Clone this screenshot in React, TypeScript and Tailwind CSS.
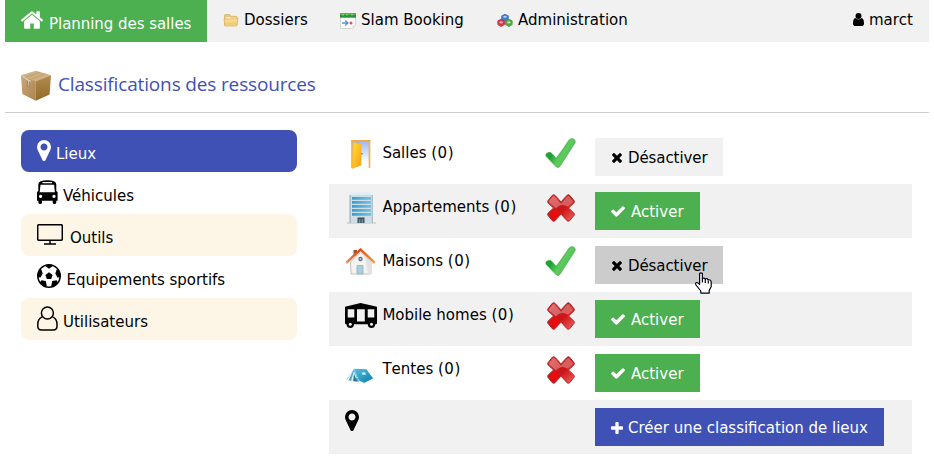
import type { ReactNode } from 'react';

const PIN = 'M1152 640q0-106-75-181t-181-75-181 75-75 181 75 181 181 75 181-75 75-181zm256 0q0 109-33 179l-364 774q-16 33-47.5 52t-67.5 19-67.5-19-46.5-52l-365-774q-33-70-33-179 0-212 150-362t362-150 362 150 150 362z';
const HOME = 'M1472 992v480q0 26-19 45t-45 19h-384v-384h-256v384h-384q-26 0-45-19t-19-45v-480q0-1 .5-3t.5-3l575-474 575 474q1 2 1 6zm223-69l-62 74q-8 9-21 11h-3q-13 0-21-7l-692-577-692 577q-12 8-24 7-13-2-21-11l-62-74q-8-10-7-23.5t11-21.5l719-599q32-26 76-26t76 26l244 204v-195q0-14 9-23t23-9h192q14 0 23 9t9 23v408l219 182q10 8 11 21.5t-7 23.5z';
const CHECK = 'M1671 566q0 40-28 68l-724 724-136 136q-28 28-68 28t-68-28l-136-136-362-362q-28-28-28-68t28-68l136-136q28-28 68-28t68 28l294 295 656-657q28-28 68-28t68 28l136 136q28 28 28 68z';
const TIMES = 'M1490 1322q0 40-28 68l-136 136q-28 28-68 28t-68-28l-294-294-294 294q-28 28-68 28t-68-28l-136-136q-28-28-28-68t28-68l294-294-294-294q-28-28-28-68t28-68l136-136q28-28 68-28t68 28l294 294 294-294q28-28 68-28t68 28l136 136q28 28 28 68t-28 68l-294 294 294 294q28 28 28 68z';
const PLUS = 'M1600 736v192q0 40-28 68t-68 28h-416v416q0 40-28 68t-68 28h-192q-40 0-68-28t-28-68v-416h-416q-40 0-68-28t-28-68v-192q0-40 28-68t68-28h416v-416q0-40 28-68t68-28h192q40 0 68 28t28 68v416h416q40 0 68 28t28 68z';

function Box() {
  return (
    <svg className="h-[32px] w-[31px] shrink-0" viewBox="0 0 31 32">
      <defs>
        <linearGradient id="boxL" x1="0" y1="0" x2="1" y2="1"><stop offset="0" stopColor="#c8a878" /><stop offset="1" stopColor="#ab8450" /></linearGradient>
        <linearGradient id="boxR" x1="0" y1="0" x2="0" y2="1"><stop offset="0" stopColor="#b28b50" /><stop offset="1" stopColor="#916929" /></linearGradient>
      </defs>
      <path d="M0 5.200 15 .8l15 4.400L14.800 12z" fill="#cfb082" />
      <path d="M0 5.200 14.800 11.500v19.300L1.300 24z" fill="url(#boxL)" />
      <path d="M14.800 11.500 30 5.200 28.600 24.500 14.800 30.800z" fill="url(#boxR)" />
      <path d="M5 7.300 19.500 2.100M9.500 9.200 24.500 3.600" stroke="#bb9862" strokeWidth=".7" fill="none" />
      <path d="M1.500 6.500l6 4 .8 6M5 8.500l5 3" stroke="#ddd6ca" strokeWidth="1" fill="none" />
      <path d="M6.500 11v6M8.600 12v5.500" stroke="#8f7f66" strokeWidth=".8" />
    </svg>
  );
}

function Folder() {
  return (
    <svg className="mt-[14px] h-[13px] w-4 shrink-0" viewBox="0 0 16 14">
      <path d="M1 12V1.500Q1 .5 2 .5h4.500L8 2.500h5.500q1 0 1 1V12z" fill="#eac678" stroke="#d0ab62" strokeWidth=".7" />
      <path d="M2.500 3.500h11v4h-11z" fill="#fbf0cf" />
      <path d="M.4 5.500h6l1.500-1.200h7.700L14 13H1.500z" fill="#f6d88c" stroke="#dcae5a" strokeWidth=".7" />
      <path d="M1.500 9h13L14 12.500H1.500z" fill="#ecc36d" opacity=".6" />
    </svg>
  );
}

function Calendar() {
  return (
    <svg className="mt-[13px] h-4 w-4 shrink-0" viewBox="0 0 16 16">
      <path d="M.5 3h15v9.500L12.500 15.500H.5z" fill="#fff" stroke="#c6c6c6" strokeWidth=".7" />
      <path d="M0 .3h16v4.400H0z" fill="#26923c" />
      <path d="M0 .3h16v1.700H0z" fill="#51b244" />
      <path d="M3 1v1.500M7 1v1.500M12 1v1.500" stroke="#d9f2d2" strokeWidth=".8" />
      <path d="M2 10h5.500M5.200 7.500 8 10l-2.800 2.500" stroke="#5a93cf" strokeWidth="1.300" fill="none" />
      <circle cx="11" cy="10" r="1.500" fill="#e8534c" />
      <path d="M12.500 15.500v-3h3z" fill="#ddd" />
    </svg>
  );
}

function Cubes() {
  return (
    <svg className="mt-[14px] h-[13px] w-4 shrink-0" viewBox="0 0 17 14">
      <path d="M5 2 8.500 .4 12 2v4L8.500 7.800 5 6z" fill="#3f7fd0" stroke="#3a74bd" strokeWidth="1" strokeLinejoin="round" />
      <path d="M.8 7.400 4.300 5.700 7.900 7.400v4l-3.600 2.100L.8 11.400z" fill="#d53a49" stroke="#c53343" strokeWidth="1" strokeLinejoin="round" />
      <path d="M9.100 7.400l3.500-1.700 3.600 1.700v4l-3.600 2.100-3.500-2.100z" fill="#55a646" stroke="#4c9a3f" strokeWidth="1" strokeLinejoin="round" />
      <ellipse cx="8.500" cy="3" rx="2" ry="1.100" fill="#b5d3f5" />
      <ellipse cx="4.300" cy="9" rx="1.800" ry="1.300" fill="#f3a5ac" />
      <ellipse cx="12.600" cy="9" rx="1.800" ry="1.300" fill="#bfe6b2" />
    </svg>
  );
}

function Person() {
  return (
    <svg className="mt-[13px] h-[13px] w-[11px] shrink-0" viewBox="0 0 11 13">
      <circle cx="5.500" cy="3" r="3" />
      <path d="M2.400 5Q0 5.800 0 10.200 0 13 2.200 13h6.600Q11 13 11 10.200 11 5.800 8.600 5 7.400 6.400 5.500 6.400T2.400 5z" />
    </svg>
  );
}

function Bus() {
  return (
    <svg className="mt-[8px] h-6 w-[21px] shrink-0" viewBox="0 0 21 24">
      <path fillRule="evenodd" d="M0 14.500V12l1.300-1V4.500Q1.500.3 10.300.3T19.300 4.500V11l1.300 1V20.800h-1.300v1.700Q19.300 24 17.500 24t-1.800-1.500v-1.700H5v1.700Q5 24 3.200 24t-1.800-1.500v-1.700H0zM5.500 2v1.200h9.600V2zM3.500 4.700 2.700 12.300h15.200L17.100 4.700zM3.600 14.800a1.600 1.600 0 1 0 .01 0zM17 14.800a1.600 1.600 0 1 0 .01 0z" />
    </svg>
  );
}

function Monitor() {
  return (
    <svg className="mt-[10px] h-[21px] w-[26px] shrink-0" viewBox="0 0 26 21" fill="none" stroke="#000">
      <rect x=".7" y=".8" width="24.600" height="15.500" rx="1.200" strokeWidth="1.500" />
      <path d="M13 16v4M7 20h12" strokeWidth="1.500" />
    </svg>
  );
}

function Ball() {
  return (
    <svg className="mt-[8px] h-6 w-6 shrink-0" viewBox="0 0 24 24">
      <defs><clipPath id="ballclip"><circle cx="12" cy="12" r="11.500" /></clipPath></defs>
      <circle cx="12" cy="12" r="11.200" fill="#fff" stroke="#000" strokeWidth="1.500" />
      <g clipPath="url(#ballclip)">
        <path d="M12 8.300l3.600 2.600-1.400 4.200H9.800L8.400 10.900z" />
        <path d="M7.600 1.500 12 4.800l4.400-3.300L15 0H9zM.2 7l4-1.800L5.700 9.500 3.500 13.500 0 13zM23.800 7l-4-1.800-1.500 4.300 2.200 4 3.500-.5zM4.300 16.200l4.500.8 1 5-2.500 2-5-4zM19.700 16.200l-4.500.8-1 5 2.500 2 5-4z" />
      </g>
    </svg>
  );
}

function UserOutline() {
  return (
    <svg className="mt-[8px] h-[25px] w-[21px] shrink-0" viewBox="0 0 21 25" fill="none" stroke="#000" strokeWidth="1.500">
      <circle cx="10.400" cy="7" r="6" />
      <path d="M5.300 10.900Q.8 12.500.8 18.500V20.300Q.8 24 4.500 24h11.800q3.700 0 3.700-3.700V18.500q0-6-4.500-7.600" />
    </svg>
  );
}

function PinIcon({ className }: { className: string }) {
  return <svg className={className} viewBox="384 128 1024 1536" fill="currentColor"><path d={PIN} /></svg>;
}

function Door() {
  return (
    <svg className="ml-[21px] mt-[10px] h-[29px] w-[21px]" viewBox="0 0 21 29">
      <defs>
        <linearGradient id="sky" x1="0" y1="0" x2="0" y2="1"><stop offset="0" stopColor="#9db8f0" /><stop offset=".8" stopColor="#fff" /></linearGradient>
        <linearGradient id="leaf" x1="0" y1="0" x2="1" y2="1"><stop offset="0" stopColor="#ffe330" /><stop offset="1" stopColor="#fa9e18" /></linearGradient>
      </defs>
      <path d="M2 28V1.200h17.500V28" fill="url(#sky)" stroke="#edb45a" strokeWidth="1.700" />
      <path d="M1.200.8h19.300" stroke="#e9a63a" strokeWidth="1.300" />
      <path d="M3.500 2.500 11 4.200v21L2 28.500z" fill="url(#leaf)" stroke="#f2b02f" strokeWidth=".6" />
      <path d="M11 13.700h1.800" stroke="#8488a5" strokeWidth="1.600" />
    </svg>
  );
}

function Building() {
  return (
    <svg className="ml-[18px] mt-[8px] h-8 w-[29px]" viewBox="0 0 29 32">
      <defs>
        <linearGradient id="glass" x1="0" y1="0" x2="1" y2="0"><stop offset="0" stopColor="#3b9dcb" /><stop offset="1" stopColor="#74c0de" /></linearGradient>
      </defs>
      <path d="M0 30.500h29v1H0z" fill="#b9c0c4" />
      <path d="M4.500.5h19.500l1.800 3H2.500z" fill="#dceff6" />
      <path d="M2.500 3h23.300v28H2.500z" fill="#cfdde6" />
      <path d="M2.500 3h1.300v28H2.500zM24.700 3h1.100v28h-1.100z" fill="#a3b8c4" />
      <path d="M5 5h19v2.800H5zM5 9h19v2.800H5zM5 13h19v2.800H5zM5 17h19v2.800H5zM5 21h19v2.800H5z" fill="url(#glass)" />
      <path d="M10.500 25.500h7V31h-7z" fill="#3d4f5c" />
      <path d="M11.800 27h1.600v4h-1.600zM14.600 27h1.600v4h-1.600z" fill="#6e8c9b" />
    </svg>
  );
}

function House() {
  return (
    <svg className="ml-[16px] mt-[10px] h-[27px] w-[31px]" viewBox="0 0 31 27">
      <defs><linearGradient id="roof" x1="0" y1="0" x2="1" y2="0"><stop offset="0" stopColor="#f08a45" /><stop offset=".45" stopColor="#d7491c" /><stop offset="1" stopColor="#ff9a27" /></linearGradient></defs>
      <path d="M8.500 2h3.500v6H8.500z" fill="#a5522f" />
      <path d="M5.500 14 15.500 4 26 14v12h-20z" fill="#f3f3f2" stroke="#b4b4b4" strokeWidth=".8" />
      <path d="M20 8l6 6v12h-3z" fill="#e2e2e2" />
      <path d="M1.500 16 15.500 3 29.500 16" fill="none" stroke="#e0cfc3" strokeWidth="1.400" />
      <path d="M1.300 14.500 15.500 1.500 29.700 14.500" fill="none" stroke="url(#roof)" strokeWidth="2.300" />
      <circle cx="15.500" cy="11" r="2.200" fill="#5c7184" /><circle cx="15.500" cy="11" r="1" fill="#b5ccda" />
      <path d="M12 17.500h6V26h-6z" fill="#a9cddc" stroke="#8eadba" strokeWidth=".7" />
    </svg>
  );
}

function MobileHome() {
  return (
    <svg className="ml-4 mt-[11px] h-[25px] w-8" viewBox="0 0 32 25">
      <path fillRule="evenodd" d="M0 4.200Q0 3.600 1 3.400L15.500 0 31 3.400q1 .2 1 .8V20q0 1.200-1.200 1.200H1.200Q0 21.200 0 20zM2.700 6.200v8.300h6.600V6.200zM12 6.200V18.500h7.800V6.200zM22.700 6.200v8.300h6.600V6.200z" />
      <circle cx="5.300" cy="21.300" r="3.700" /><circle cx="26.500" cy="21.300" r="3.700" />
      <circle cx="5.300" cy="21.300" r="1.500" fill="#f1f1f1" /><circle cx="26.500" cy="21.300" r="1.500" fill="#f1f1f1" />
    </svg>
  );
}

function Tent() {
  return (
    <svg className="ml-[17px] mt-[22px] h-4 w-[29px]" viewBox="0 0 29 16">
      <defs><linearGradient id="tent" x1="0" y1="0" x2="1" y2="1"><stop offset="0" stopColor="#54bfe0" /><stop offset="1" stopColor="#0b7eab" /></linearGradient></defs>
      <path d="M8 1.500 .5 12M12 12l7 3.500M21 6l7.500 4.500" stroke="#b5c9d1" strokeWidth=".8" />
      <path d="M8 1 2.500 12.500 13 13.800z" fill="#4ba9c8" />
      <path d="M8 .7 20.500 1.200 27 10.500 18.500 14.800 13 12.500z" fill="url(#tent)" />
      <path d="M8 3l-3 9.700 3.500.6 2-4z" fill="#d5f1fa" />
      <path d="M8 6l-.8 7 3.800.4z" fill="#227393" />
      <path d="M15.500 4.500l3.500-.3 1.200 2.300-3.500.5z" fill="#c1eaf6" />
    </svg>
  );
}

function Tick() {
  return (
    <svg className="h-[31px] w-[31px]" viewBox="0 0 31 31">
      <defs><linearGradient id="tick" x1="0" y1=".2" x2="1" y2=".8"><stop offset="0" stopColor="#3aa742" /><stop offset=".3" stopColor="#1ba331" /><stop offset=".55" stopColor="#5fca5e" /><stop offset="1" stopColor="#4cb655" /></linearGradient></defs>
      <path d="M1 18.300Q-.2 15.800 3 14.600q2.500-.8 4.200 1.200l3.900 4.400Q17.500 12 23.800 2.200q1.600-2.200 4.500-1.400 3 1.500 1.700 4.200L15.300 28q-2 3-4.500.5z" fill="url(#tick)" stroke="#3ba345" strokeWidth=".5" />
    </svg>
  );
}

function Cross() {
  return (
    <svg className="ml-[2px] h-7 w-7" viewBox="0 0 28 28">
      <defs><linearGradient id="cross" x1="0" y1="0" x2="1" y2="1"><stop offset="0" stopColor="#d83a3c" /><stop offset=".45" stopColor="#c4191b" /><stop offset=".58" stopColor="#cf1617" /><stop offset="1" stopColor="#ec6664" /></linearGradient></defs>
      <path d="M.9 6.800 5.400 1.200Q6.600.2 8 1.300L14 7.900 20 1.300q1.400-1.100 2.600-.1L27.100 6.800q.7 1.100-.3 2.300L21.500 14l5.300 5q1 1.200.3 2.300L22.600 26.800q-1.200 1-2.600-.1L14 20.100 8 26.700q-1.400 1.100-2.600.1L.9 21.300Q.2 20.200 1.200 19l5.300-5L1.200 9.100Q.2 7.900.9 6.800z" fill="url(#cross)" stroke="#a9201f" strokeWidth=".9" strokeLinejoin="round" />
      <path d="M2 7.200 6 2.300Q6.800 1.700 7.500 2.300L14 9.600 20.500 2.300q.7-.6 1.500 0l4 4.900q.3.600-.2 1.200l-4.800 4.300Q14 8.500 9 14.500L2.200 8.400Q1.700 7.800 2 7.200z" fill="#fff" opacity=".3" />
      <path d="M2 20.700 9 14.500l4 4.500-6.500 6.800z" fill="#ff0505" opacity=".6" />
    </svg>
  );
}

function Hand() {
  return (
    <svg className="absolute left-[100px] top-[26px] h-[22px] w-[17px]" viewBox="0 0 17 22">
      <path d="M4.600 1.500Q6 .2 7.400 1.500V6.500Q9 5.500 10.200 7q1.800-1 3 .8 2.600-.3 3 1.900v4.800l-2 4v2.600H5.800V19L1 13Q0 11 1.500 10.500q1.500-.2 3.100 2z" fill="#fff" stroke="#000014" strokeWidth="1.200" strokeLinejoin="round" />
      <path d="M7.400 6v4.500M10.300 7v4M13.300 8.500v3" stroke="#000014" strokeWidth="1.200" />
    </svg>
  );
}

function Btn({ kind, hover }: { kind: 'on' | 'off' | 'new'; hover?: boolean }) {
  if (kind === 'on')
    return (
      <button className="flex h-[38px] w-[105px] bg-[#4caf50] pl-4 pt-[10px] text-white">
        <svg className="mt-1 h-[11px] w-[14px]" viewBox="121 334 1550 1188" fill="currentColor"><path d={CHECK} /></svg>
        <span className="ml-[6px]">Activer</span>
      </button>
    );
  if (kind === 'off')
    return (
      <button className={hover ? 'relative flex h-[38px] w-[128px] bg-[#ccc] pl-[17px] pt-[10px]' : 'relative flex h-[38px] w-[128px] bg-[#f1f1f1] pl-[17px] pt-[10px]'}>
        <svg className="mt-[5px] h-[10px] w-[10px]" viewBox="302 366 1188 1188" fill="currentColor"><path d={TIMES} /></svg>
        <span className="ml-[6px] tracking-[-0.08px]">Désactiver</span>
        {hover && <Hand />}
      </button>
    );
  return (
    <button className="flex h-[38px] w-[289px] bg-[#3f51b5] pl-4 pt-[10px] text-white">
      <svg className="mt-[4px] h-3 w-3" viewBox="192 128 1408 1408" fill="currentColor"><path d={PLUS} /></svg>
      <span className="ml-[5px]">Créer une classification de lieux</span>
    </button>
  );
}

function Row({ icon, label, active, hover, shaded }: { icon: ReactNode; label: string; active: boolean; hover?: boolean; shaded?: boolean }) {
  return (
    <div className={shaded ? 'flex h-[54px] bg-[#f1f1f1]' : 'flex h-[54px]'}>
      <div className="w-[53.4px] shrink-0">{icon}</div>
      <span className="w-[162.600px] shrink-0 pt-[13px] [font-kerning:none]">{label} <span className="tracking-[0.500px]">(0)</span></span>
      <div className="w-[50px] shrink-0 pt-2">{active ? <Tick /> : <div className="pt-[2px]"><Cross /></div>}</div>
      <div className="pt-2"><Btn kind={active ? 'off' : 'on'} hover={hover} /></div>
    </div>
  );
}

export default function App() {
  return (
    <div className="h-[458px] w-[934px] overflow-hidden bg-white pl-[5px] font-['DejaVu_Sans',Verdana,sans-serif] text-[15px] leading-5 whitespace-nowrap text-black">
      <nav className="flex h-[42px] w-[924px] bg-[#f1f1f1]">
        <div className="flex w-[202px] bg-[#4caf50] pl-4 text-white">
          <svg className="mt-[11px] h-[18px] w-[22px] shrink-0" viewBox="89 250 1614 1286" fill="currentColor"><path d={HOME} /></svg>
          <span className="ml-[6px] pt-[14px] tracking-[-0.04px]">Planning des salles</span>
        </div>
        <div className="flex w-[117px] pl-4"><Folder /><span className="ml-[5px] pt-[10px]">Dossiers</span></div>
        <div className="flex w-[157px] pl-4"><Calendar /><span className="ml-[5px] pt-[10px]">Slam Booking</span></div>
        <div className="flex grow pl-4"><Cubes /><span className="ml-[5px] pt-[10px]">Administration</span></div>
        <div className="flex w-[76px]"><Person /><span className="ml-[5px] pt-[10px]">marct</span></div>
      </nav>
      <div className="flex h-[71px] w-[924px] border-b border-[#ccc] pl-4 pt-[28px]">
        <Box />
        <h1 className="ml-[6px] font-['Open_Sans',sans-serif] text-[19px] leading-7 font-normal tracking-[-0.150px] text-[#3f51b5]">Classifications des ressources</h1>
      </div>
      <div className="flex pl-4 pt-[17px]">
        <div className="w-[276px]">
          <div className="flex h-[42px] rounded-lg bg-[#3f51b5] pl-4 text-white"><PinIcon className="mt-[10px] h-[21px] w-[14px] shrink-0" /><span className="ml-[5px] pt-[14px]">Lieux</span></div>
          <div className="flex h-[42px] pl-4"><Bus /><span className="ml-[5px] pt-[14px]">Véhicules</span></div>
          <div className="flex h-[42px] rounded-lg bg-[#fdf5e6] pl-4"><Monitor /><span className="ml-[7px] pt-[14px]">Outils</span></div>
          <div className="flex h-[42px] pl-4"><Ball /><span className="ml-[5.500px] pt-[14px] tracking-[-0.02px]">Equipements sportifs</span></div>
          <div className="flex h-[42px] rounded-lg bg-[#fdf5e6] pl-4"><UserOutline /><span className="ml-[5px] pt-[14px]">Utilisateurs</span></div>
        </div>
        <div className="ml-8 w-[583px]">
          <Row icon={<Door />} label="Salles" active />
          <Row icon={<Building />} label="Appartements" active={false} shaded />
          <Row icon={<House />} label="Maisons" active hover />
          <Row icon={<MobileHome />} label="Mobile homes" active={false} shaded />
          <Row icon={<Tent />} label="Tentes" active={false} />
          <div className="flex h-[54px] bg-[#f1f1f1]">
            <div className="w-[266px] pl-4 pt-[10px]"><PinIcon className="h-[21px] w-[14px]" /></div>
            <div className="pt-2"><Btn kind="new" /></div>
          </div>
        </div>
      </div>
    </div>
  );
}
